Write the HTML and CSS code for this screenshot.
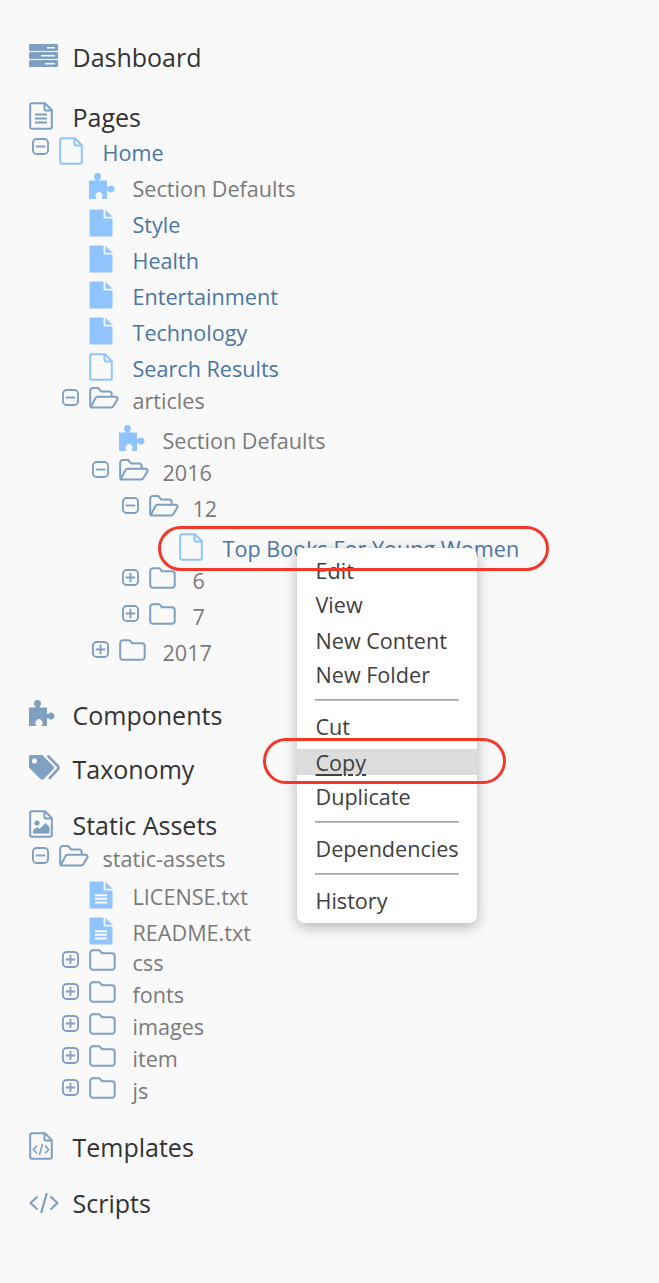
FILE: index.html
```html
<!DOCTYPE html>
<html lang="en">
<head>
<meta charset="utf-8">
<title>Site navigation</title>
<link rel="stylesheet" href="styles.css">
</head>
<body>
<svg class="defs" aria-hidden="true">
  <symbol id="file-o" viewBox="0 0 24 28"><path d="M1.200 3a1.800 1.800 0 0 1 1.800-1.800h13l6.800 7V25a1.800 1.800 0 0 1-1.800 1.800H3A1.800 1.800 0 0 1 1.200 25Z" fill="none" stroke="currentColor" stroke-width="2"/><path d="M15.500 1.500v6a1 1 0 0 0 1 1h6.500" fill="none" stroke="currentColor" stroke-width="2"/></symbol>
  <symbol id="file-f" viewBox="0 0 24 28"><path d="M2 .5h12.500V8a1.500 1.500 0 0 0 1.500 1.500h7.500V26a1.500 1.500 0 0 1-1.500 1.500H2A1.500 1.500 0 0 1 .5 26V2A1.500 1.500 0 0 1 2 .5ZM16.500.8l7 6.900h-7Z" fill="currentColor"/></symbol>
  <symbol id="file-t" viewBox="0 0 24 28"><path d="M2 .5h12.500V8a1.500 1.500 0 0 0 1.500 1.500h7.500V26a1.500 1.500 0 0 1-1.500 1.500H2A1.500 1.500 0 0 1 .5 26V2A1.500 1.500 0 0 1 2 .5ZM16.500.8l7 6.900h-7Z" fill="currentColor"/><path d="M6 14.200h12M6 17.800h12M6 21.400h12" stroke="#f9f9f9" stroke-width="2"/></symbol>
  <symbol id="file-lines" viewBox="0 0 24 28"><path d="M1.200 3a1.800 1.800 0 0 1 1.800-1.800h13l6.800 7V25a1.800 1.800 0 0 1-1.800 1.800H3A1.800 1.800 0 0 1 1.200 25Z" fill="none" stroke="currentColor" stroke-width="2"/><path d="M15.500 1.500v6a1 1 0 0 0 1 1h6.500M6 12.500h12M6 16.500h12M6 20.500h12" fill="none" stroke="currentColor" stroke-width="2"/></symbol>
  <symbol id="file-img" viewBox="0 0 24 28"><path d="M1.200 3a1.800 1.800 0 0 1 1.800-1.800h13l6.800 7V25a1.800 1.800 0 0 1-1.800 1.800H3A1.800 1.800 0 0 1 1.200 25Z" fill="none" stroke="currentColor" stroke-width="2"/><path d="M15.500 1.500v6a1 1 0 0 0 1 1h6.500" fill="none" stroke="currentColor" stroke-width="2"/><circle cx="8" cy="13" r="2.600" fill="currentColor"/><path d="M4 23.500v-3l4-3.500 2.500 2 6-6 4 4v6.500Z" fill="currentColor"/></symbol>
  <symbol id="file-code" viewBox="0 0 24 28"><path d="M1.200 3a1.800 1.800 0 0 1 1.800-1.800h13l6.800 7V25a1.800 1.800 0 0 1-1.800 1.800H3A1.800 1.800 0 0 1 1.200 25Z" fill="none" stroke="currentColor" stroke-width="2"/><path d="M15.500 1.500v6a1 1 0 0 0 1 1h6.500" fill="none" stroke="currentColor" stroke-width="2"/><path d="M8 13.500l-3.500 4 3.500 4M16 13.500l3.500 4-3.500 4M13.500 12l-3 11" fill="none" stroke="currentColor" stroke-width="1.600"/></symbol>
  <symbol id="folder" viewBox="0 0 27 22"><path d="M4 1.200h5.500a2 2 0 0 1 1.600.8l1.800 2.200h10a2.800 2.800 0 0 1 2.800 2.800v11a2.800 2.800 0 0 1-2.800 2.800H4a2.800 2.800 0 0 1-2.800-2.800V4A2.800 2.800 0 0 1 4 1.200Z" fill="none" stroke="currentColor" stroke-width="2"/></symbol>
  <symbol id="folder-open" viewBox="0 0 30 22"><path d="M1.200 19V3.500A2.500 2.500 0 0 1 3.700 1h5.500l3 3.500h8a2.500 2.500 0 0 1 2.500 2.500v2.800M1.500 20.500 6.500 11a2.500 2.500 0 0 1 2.200-1.300h18a1.900 1.900 0 0 1 1.600 2.900l-4 6.700a2.500 2.500 0 0 1-2.100 1.200H3a1.700 1.700 0 0 1-1.500-.5Z" fill="none" stroke="currentColor" stroke-width="2"/></symbol>
  <symbol id="puzzle" viewBox="0 0 27 26"><path d="M0 7.500h6.300V6.200a3.500 3.500 0 1 1 4.400 0v1.300H18v6.300h1.300a3.500 3.500 0 1 1 0 4.400H18V26h-5.300v-1a3.500 3.500 0 1 0-5.400 0v1H0Z" fill="currentColor"/></symbol>
  <symbol id="server" viewBox="0 0 29 23"><path d="M1.500 0h26A1.500 1.500 0 0 1 29 1.500V5.500A1.500 1.500 0 0 1 27.500 7h-26A1.500 1.500 0 0 1 0 5.500V1.500A1.500 1.500 0 0 1 1.500 0ZM18 3v1.500h8V3ZM1.500 8h26A1.500 1.500 0 0 1 29 9.500v4A1.500 1.500 0 0 1 27.500 15h-26A1.500 1.500 0 0 1 0 13.500v-4A1.500 1.500 0 0 1 1.500 8ZM12 11v1.500h14V11ZM1.500 16h26A1.500 1.500 0 0 1 29 17.500v4A1.500 1.500 0 0 1 27.500 23h-26A1.500 1.500 0 0 1 0 21.500v-4A1.500 1.500 0 0 1 1.500 16ZM16 19v1.500h10V19Z" fill="currentColor" fill-rule="evenodd"/></symbol>
  <symbol id="tags" viewBox="0 0 31 26"><path d="M2 0h10a3 3 0 0 1 2.200.9L24 10.800a2.600 2.600 0 0 1 0 3.700L15 23.800a2.600 2.600 0 0 1-3.700 0L.9 13.400A3 3 0 0 1 0 11V2a2 2 0 0 1 2-2Zm3.500 3.500a2.500 2.500 0 1 0 0 5 2.500 2.500 0 0 0 0-5Z" fill="currentColor" fill-rule="evenodd"/><path d="M18.500.5 28.800 11a2.400 2.400 0 0 1 0 3.400L20 23.800" fill="none" stroke="currentColor" stroke-width="2.600"/></symbol>
  <symbol id="code" viewBox="0 0 30 22"><path d="M8.500 4.500 1.500 11l7 6.500M21.500 4.500l7 6.500-7 6.500M17.800 1 12.200 21" fill="none" stroke="currentColor" stroke-width="2.200"/></symbol>
  <symbol id="minus" viewBox="0 0 18 18"><rect x="1" y="1" width="16" height="16" rx="4" fill="none" stroke="currentColor" stroke-width="2"/><path d="M4 9h10" stroke="currentColor" stroke-width="2"/></symbol>
  <symbol id="plus" viewBox="0 0 18 18"><rect x="1" y="1" width="16" height="16" rx="4" fill="none" stroke="currentColor" stroke-width="2"/><path d="M4 9h10M9 4v10" stroke="currentColor" stroke-width="2"/></symbol>
</svg>

<nav class="sidebar">
  <div class="nav-item h60"><span class="slot"><svg class="ni server"><use href="#server"/></svg></span><span>Dashboard</span></div>
  <div class="nav-item h36"><span class="slot"><svg class="ni file"><use href="#file-lines"/></svg></span><span>Pages</span></div>
  <ul class="tree">
    <li>
      <div class="row h36 root"><svg class="tg"><use href="#minus"/></svg><span class="slot"><svg class="ic lt file"><use href="#file-o"/></svg></span><span class="link">Home</span></div>
      <ul>
        <li><div class="row h36"><span class="tg"></span><span class="slot"><svg class="ic lt puz"><use href="#puzzle"/></svg></span><span>Section Defaults</span></div></li>
        <li><div class="row h36"><span class="tg"></span><span class="slot"><svg class="ic lt file"><use href="#file-f"/></svg></span><span class="link">Style</span></div></li>
        <li><div class="row h36"><span class="tg"></span><span class="slot"><svg class="ic lt file"><use href="#file-f"/></svg></span><span class="link">Health</span></div></li>
        <li><div class="row h36"><span class="tg"></span><span class="slot"><svg class="ic lt file"><use href="#file-f"/></svg></span><span class="link">Entertainment</span></div></li>
        <li><div class="row h36"><span class="tg"></span><span class="slot"><svg class="ic lt file"><use href="#file-f"/></svg></span><span class="link">Technology</span></div></li>
        <li><div class="row h32"><span class="tg"></span><span class="slot"><svg class="ic lt file"><use href="#file-o"/></svg></span><span class="link">Search Results</span></div></li>
      </ul>
      <ul>
        <li>
          <div class="row h40"><svg class="tg"><use href="#minus"/></svg><span class="slot"><svg class="ic fo"><use href="#folder-open"/></svg></span><span>articles</span></div>
          <ul>
            <li><div class="row h32"><span class="tg"></span><span class="slot"><svg class="ic lt puz"><use href="#puzzle"/></svg></span><span>Section Defaults</span></div></li>
            <li><div class="row h36"><svg class="tg"><use href="#minus"/></svg><span class="slot"><svg class="ic fo"><use href="#folder-open"/></svg></span><span>2016</span></div>
              <ul>
                <li><div class="row h40"><svg class="tg"><use href="#minus"/></svg><span class="slot"><svg class="ic fo"><use href="#folder-open"/></svg></span><span>12</span></div>
                  <ul>
                    <li><div class="row h32"><span class="tg"></span><span class="slot"><svg class="ic lt file"><use href="#file-o"/></svg></span><span class="link">Top Books For Young Women</span></div></li>
                  </ul>
                </li>
                <li><div class="row h36"><svg class="tg"><use href="#plus"/></svg><span class="slot"><svg class="ic fc"><use href="#folder"/></svg></span><span>6</span></div></li>
                <li><div class="row h36"><svg class="tg"><use href="#plus"/></svg><span class="slot"><svg class="ic fc"><use href="#folder"/></svg></span><span>7</span></div></li>
              </ul>
            </li>
            <li><div class="row h62"><svg class="tg"><use href="#plus"/></svg><span class="slot"><svg class="ic fc"><use href="#folder"/></svg></span><span>2017</span></div></li>
          </ul>
        </li>
      </ul>
    </li>
  </ul>

  <div class="nav-item h54"><span class="slot"><svg class="ni puzn"><use href="#puzzle"/></svg></span><span>Components</span></div>
  <div class="nav-item h56"><span class="slot"><svg class="ni tag"><use href="#tags"/></svg></span><span>Taxonomy</span></div>
  <div class="nav-item h34"><span class="slot"><svg class="ni file"><use href="#file-img"/></svg></span><span>Static Assets</span></div>
  <ul class="tree">
    <li>
      <div class="row h38"><svg class="tg"><use href="#minus"/></svg><span class="slot"><svg class="ic fo"><use href="#folder-open"/></svg></span><span>static-assets</span></div>
      <ul>
        <li><div class="row h36"><span class="tg"></span><span class="slot"><svg class="ic lt file"><use href="#file-t"/></svg></span><span>LICENSE.txt</span></div></li>
        <li><div class="row h30"><span class="tg"></span><span class="slot"><svg class="ic lt file"><use href="#file-t"/></svg></span><span>README.txt</span></div></li>
        <li><div class="row h32"><svg class="tg"><use href="#plus"/></svg><span class="slot"><svg class="ic fc"><use href="#folder"/></svg></span><span>css</span></div></li>
        <li><div class="row h32"><svg class="tg"><use href="#plus"/></svg><span class="slot"><svg class="ic fc"><use href="#folder"/></svg></span><span>fonts</span></div></li>
        <li><div class="row h32"><svg class="tg"><use href="#plus"/></svg><span class="slot"><svg class="ic fc"><use href="#folder"/></svg></span><span>images</span></div></li>
        <li><div class="row h32"><svg class="tg"><use href="#plus"/></svg><span class="slot"><svg class="ic fc"><use href="#folder"/></svg></span><span>item</span></div></li>
        <li><div class="row h56"><svg class="tg"><use href="#plus"/></svg><span class="slot"><svg class="ic fc"><use href="#folder"/></svg></span><span>js</span></div></li>
      </ul>
    </li>
  </ul>
  <div class="nav-item h56"><span class="slot"><svg class="ni file"><use href="#file-code"/></svg></span><span>Templates</span></div>
  <div class="nav-item h56"><span class="slot"><svg class="ni code"><use href="#code"/></svg></span><span>Scripts</span></div>
</nav>

<div class="menu">
  <div class="mi h34">Edit</div>
  <div class="mi h36">View</div>
  <div class="mi h34">New Content</div>
  <div class="mi">New Folder</div>
  <div class="sep"></div>
  <div class="mi cut">Cut</div>
  <div class="mi hl"><u>Copy</u></div>
  <div class="mi">Duplicate</div>
  <div class="sep"></div>
  <div class="mi">Dependencies</div>
  <div class="sep"></div>
  <div class="mi">History</div>
</div>
<div class="ring ring-top"></div>
<div class="ring ring-copy"></div>
</body>
</html>
```
FILE: styles.css
```css
* { box-sizing: border-box; }
html, body { margin: 0; height: 1283px; overflow: hidden; }
body { background: #f9f9f9; font-family: "Open Sans", sans-serif; color: #7a7a7a; position: relative; }
.defs { position: absolute; width: 0; height: 0; }
ul { list-style: none; margin: 0; padding: 0 0 0 30px; }
ul.tree { padding-left: 3px; }

.sidebar { padding: 42px 0 0 29px; }
.slot { flex: none; width: 43.5px; display: flex; align-items: flex-start; }
.nav-item { display: flex; align-items: flex-start; font-size: 25px; line-height: 30px; color: #333; }
.ni { flex: none; color: #7f9fc3; }
.ni.server { width: 29px; height: 23px; margin-top: 2px; }
.ni.file { width: 24px; height: 28px; }
.ni.puzn { width: 27px; height: 26px; }
.ni.tag { width: 31px; height: 26px; margin-top: 1px; }
.ni.code { width: 30px; height: 22px; margin-top: 4px; }

.row { display: flex; align-items: flex-start; font-size: 21.6px; line-height: 30px; }
.tg { flex: none; width: 17px; height: 17px; margin: 3px 10px 0 0; color: #7f9fc3; }
span.tg { height: 0; }
.root .tg { margin-top: 0; }
.ic { flex: none; margin-top: 1px; }
.ic.lt { color: #90c4ff; margin-top: -1px; }
.ic.file { width: 24px; height: 28px; }
.ic.puz { width: 27px; height: 26px; }
.ic.fo { width: 30px; height: 22px; color: #7f9fc3; }
.ic.fc { width: 27px; height: 22px; color: #7f9fc3; }
.link { color: #4b76a1; }

.menu { position: absolute; left: 297px; top: 548px; width: 180px; height: 375px; padding-top: 8px; background: #fff; border-radius: 8px; box-shadow: 0 4px 14px rgba(0,0,0,.28); font-size: 21.6px; line-height: 30px; color: #404040; }
.mi { padding-left: 18.5px; height: 30px; }
.mi.cut { height: 37px; }
.mi.hl { height: 26px; line-height: 28px; background: #dcdcdc; margin: 0 0 7px; }
.mi.hl u { text-underline-offset: 3px; }
.sep { height: 22px; margin: 0 18px; position: relative; }
.sep::after { content: ""; position: absolute; left: 0; right: 0; top: 9px; height: 2px; background: linear-gradient(#999, #ccc); }

.h30 { height: 30px; } .h32 { height: 32px; } .h34 { height: 34px; }
.h36 { height: 36px; } .h38 { height: 38px; } .h40 { height: 40px; }
.h54 { height: 54px; } .h56 { height: 56px; } .h60 { height: 60px; } .h62 { height: 62px; }

.ring { position: absolute; border: 3px solid #f5372a; border-radius: 24px; }
.ring-top { left: 158px; top: 526px; width: 391px; height: 45px; }
.ring-copy { left: 263px; top: 738px; width: 243px; height: 46px; }
```
